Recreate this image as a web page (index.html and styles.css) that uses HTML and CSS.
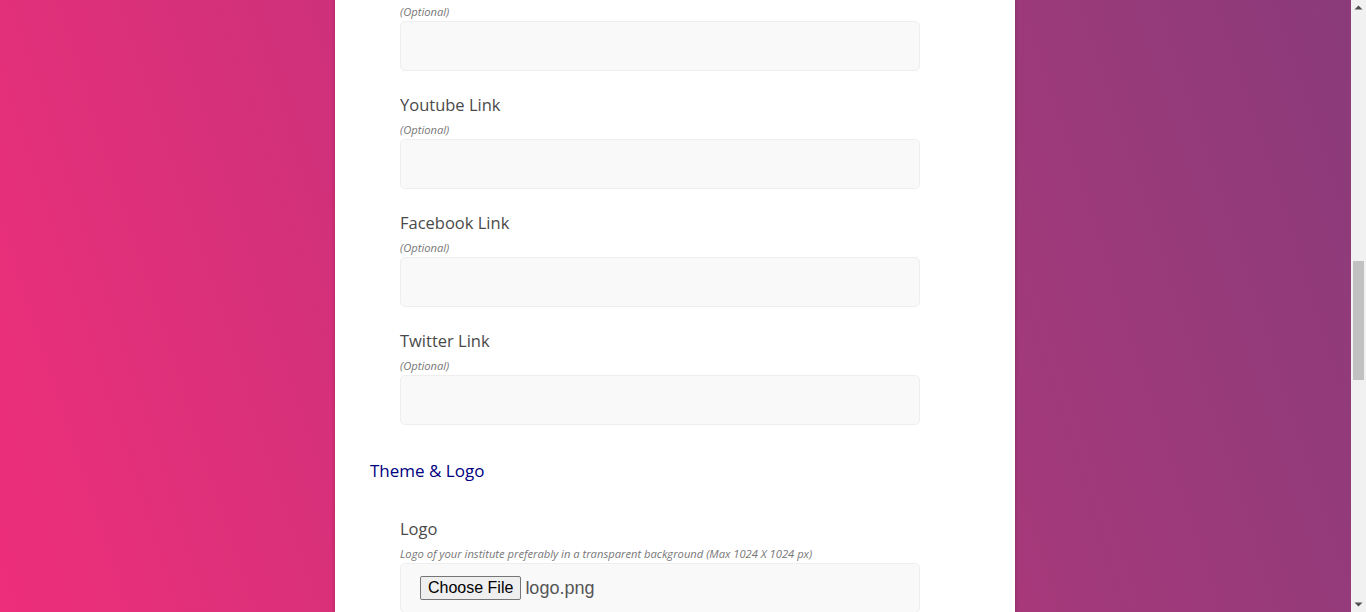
FILE: index.html
```html
<!DOCTYPE html>
<html lang="en">
<head>
<meta charset="utf-8">
<title>Institute Registration</title>
<link rel="stylesheet" href="styles.css">
</head>
<body>
<div class="shell">
<div class="page" id="page">
<main class="card">
  <h1 class="title">Register Your Institute</h1>

  <h2 class="section">Basic Information</h2>
  <div class="group"><label class="label">Institute Name</label><p class="hint">Full name of your institute</p><input class="field" type="text"></div>
  <div class="group"><label class="label">Short Name</label><p class="hint">(Optional)</p><input class="field" type="text"></div>
  <div class="group"><label class="label">Email</label><p class="hint">Official email address</p><input class="field" type="text"></div>
  <div class="group"><label class="label">Phone Number</label><p class="hint">Contact number</p><input class="field" type="text"></div>
  <div class="group"><label class="label">Address</label><p class="hint">Street address</p><input class="field" type="text"></div>
  <div class="group"><label class="label">City</label><p class="hint">&nbsp;</p><input class="field" type="text"></div>
  <div class="group"><label class="label">State</label><p class="hint">&nbsp;</p><input class="field" type="text"></div>
  <div class="group"><label class="label">Pincode</label><p class="hint">&nbsp;</p><input class="field" type="text"></div>
  <div class="group"><label class="label">Website</label><p class="hint">(Optional)</p><input class="field" type="text"></div>
  <div class="group"><label class="label">Instagram Link</label><p class="hint">(Optional)</p><input class="field" type="text"></div>
  <div class="group" id="anchor"><label class="label">Youtube Link</label><p class="hint">(Optional)</p><input class="field" type="text"></div>
  <div class="group"><label class="label">Facebook Link</label><p class="hint">(Optional)</p><input class="field" type="text"></div>
  <div class="group"><label class="label">Twitter Link</label><p class="hint">(Optional)</p><input class="field" type="text"></div>

  <h2 class="section">Theme &amp; Logo</h2>
  <div class="group"><label class="label">Logo</label><p class="hint">Logo of your institute preferably in a transparent background (Max 1024 X 1024 px)</p>
    <div class="field file"><button class="choose" type="button">Choose File</button><span class="fname">logo.png</span></div>
  </div>
  <div class="group"><label class="label">Favicon</label><p class="hint">(Optional) Square image (Max 256 X 256 px)</p>
    <div class="field file"><button class="choose" type="button">Choose File</button><span class="fname">No file chosen</span></div>
  </div>
  <div class="group"><label class="label">Theme Color</label><p class="hint">Primary color of your website</p><input class="field" type="text"></div>

  <h2 class="section">Admin Account</h2>
  <div class="group"><label class="label">Admin Name</label><p class="hint">&nbsp;</p><input class="field" type="text"></div>
  <div class="group"><label class="label">Admin Email</label><p class="hint">&nbsp;</p><input class="field" type="text"></div>
  <div class="group"><label class="label">Admin Phone</label><p class="hint">&nbsp;</p><input class="field" type="text"></div>
  <div class="group"><label class="label">Password</label><p class="hint">Minimum 8 characters</p><input class="field" type="password"></div>
  <div class="group"><label class="label">Confirm Password</label><p class="hint">&nbsp;</p><input class="field" type="password"></div>

  <div class="actions"><button class="submit" type="button">Submit</button></div>
</main>
</div>
<div class="scrollbar" aria-hidden="true">
  <div class="sb-btn"><svg width="15" height="15" viewBox="0 0 15 15"><path d="M3.5 9.5 L7.5 5.5 L11.5 9.5 Z" fill="#505050"/></svg></div>
  <div class="sb-track"><div class="sb-thumb" id="thumb" style="margin-top:248px;height:117px"></div></div>
  <div class="sb-btn"><svg width="15" height="15" viewBox="0 0 15 15"><path d="M3.5 5.5 L7.5 9.5 L11.5 5.5 Z" fill="#505050"/></svg></div>
</div>
</div>
<script src="script.js"></script>
</body>
</html>
```
FILE: styles.css
```css
html, body {
  margin: 0;
  height: 100%;
  overflow: hidden;
}
body {
  font-family: "Open Sans", "Noto Sans", sans-serif;
  color: #444;
}
.shell {
  display: grid;
  grid-template-columns: 1fr 15px;
  height: 100vh;
}
.page {
  height: 100vh;
  overflow-y: scroll;
  scrollbar-width: none;
  padding-right: 1px;
  background: linear-gradient(72deg, #ee2e7a 0%, #c8327a 40%, #a2397a 70%, #8b3b7a 100%);
}
.page::-webkit-scrollbar {
  display: none;
}
.scrollbar {
  display: flex;
  flex-direction: column;
  background: #f1f1f1;
  height: 100vh;
}
.sb-btn {
  height: 15px;
  flex: none;
}
.sb-btn svg {
  display: block;
}
.sb-track {
  flex: 1;
  display: flex;
  flex-direction: column;
}
.sb-thumb {
  margin-left: 2px;
  margin-right: 2px;
  background: #c1c1c1;
}
.card {
  width: 680px;
  margin: 0 auto;
  background: #fff;
  box-sizing: border-box;
  padding: 50px 35px 106px;
  box-shadow: 0 0 4px rgba(0,0,0,0.22);
}
.title {
  margin: 0 0 40px;
  font-size: 26px;
  font-weight: 600;
  color: #000080;
  text-align: center;
}
.section {
  margin: 34px 0 34px;
  font-size: 17px;
  line-height: 24px;
  font-weight: 500;
  color: #000080;
}
.group {
  margin: 0 30px 22px;
  display: flex;
  flex-direction: column;
}
.label {
  font-size: 16.5px;
  line-height: 24px;
  color: #4a4a4a;
}
.hint {
  margin: 5px 0 1px;
  font-size: 11.2px;
  line-height: 16px;
  font-style: italic;
  color: #777;
}
.field {
  box-sizing: border-box;
  width: 520px;
  height: 50px;
  border: 1px solid #eee;
  border-radius: 5px;
  background: #f9f9f9;
  font: inherit;
}
.file {
  display: flex;
  align-items: center;
  padding-left: 19px;
  gap: 4px;
}
.choose {
  font-family: "Liberation Sans", Arial, sans-serif;
  font-size: 16px;
  color: #000;
  background: #efefef;
  border: 1px solid #767676;
  border-radius: 2px;
  height: 24px;
  padding: 0 7px;
  margin: 0;
}
.fname {
  font-family: "Liberation Sans", Arial, sans-serif;
  font-size: 18px;
  color: #555;
}
.actions {
  margin: 70px 30px 0;
}
.submit {
  font: inherit;
  font-size: 16px;
  color: #fff;
  background: #000080;
  border: 0;
  border-radius: 5px;
  padding: 12px 36px;
}
```
FILE: script.js
```js
window.addEventListener('load', function () {
  var page = document.getElementById('page');
  var el = document.getElementById('anchor');
  var top = el.getBoundingClientRect().top + page.scrollTop;
  page.scrollTop = top - 93;
  var track = page.clientHeight - 30;
  var thumb = document.getElementById('thumb');
  var h = Math.max(20, track * page.clientHeight / page.scrollHeight);
  var t = (track - h) * page.scrollTop / (page.scrollHeight - page.clientHeight);
  thumb.style.height = h + 'px';
  thumb.style.marginTop = t + 'px';
});
```
